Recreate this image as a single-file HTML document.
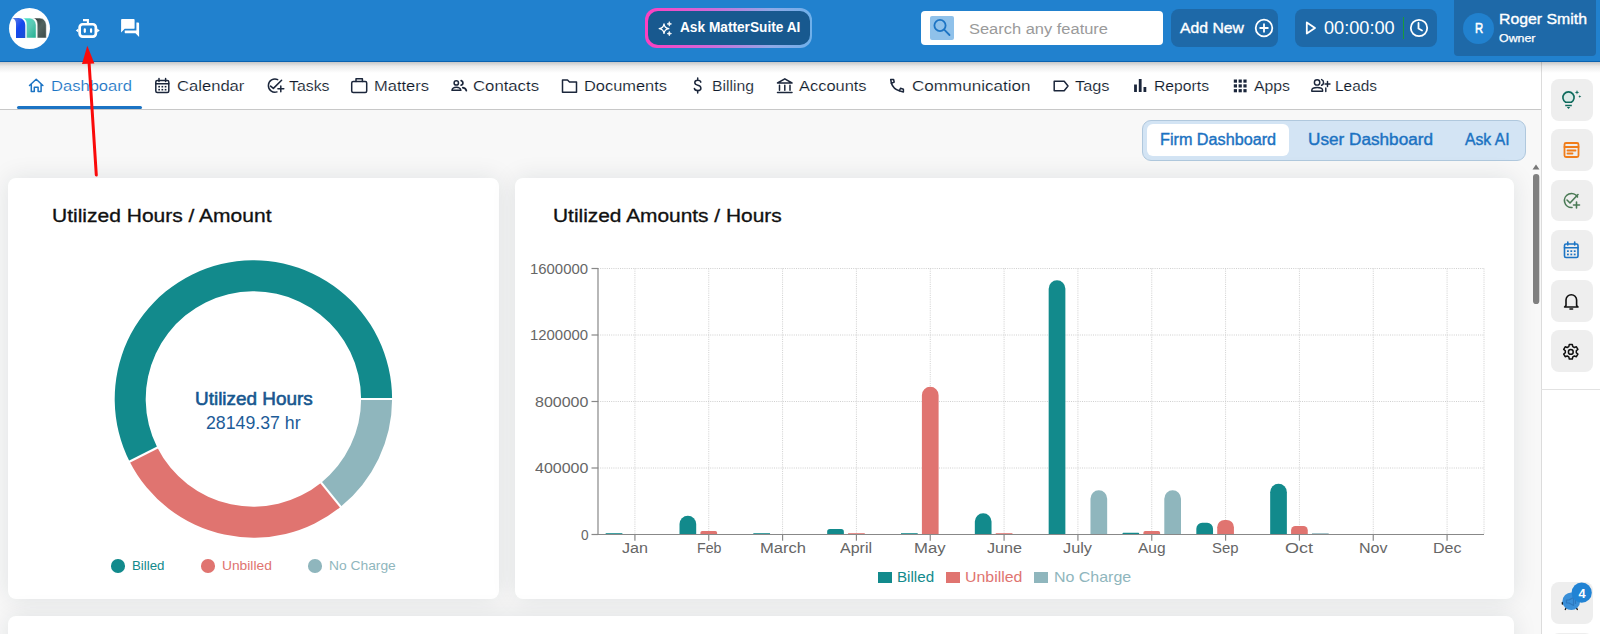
<!DOCTYPE html>
<html><head><meta charset="utf-8">
<style>
*{margin:0;padding:0;box-sizing:border-box}
html,body{width:1600px;height:634px;overflow:hidden;background:#f8f8f8;font-family:"Liberation Sans",sans-serif}
.a{position:absolute}
.tx{position:absolute;white-space:nowrap;line-height:1;transform-origin:0 0}
#hdr{left:0;top:0;width:1600px;height:61.5px;background:#2181ce}
#nav{left:0;top:61.5px;width:1541px;height:48px;background:#fff;border-bottom:1px solid #c8c8c8}
#navsh{left:0;top:61.5px;width:1600px;height:11px;background:linear-gradient(rgba(0,0,0,.22),rgba(0,0,0,.08) 40%,rgba(0,0,0,0))}
#hdrline{left:0;top:60.5px;width:1600px;height:1px;background:#0a62b0}
#side{left:1541px;top:61.5px;width:59px;height:573px;background:#fff;border-left:1px solid #dcdcdc}
.card{background:#fff;border-radius:8px;box-shadow:0 0 24px rgba(20,35,50,.10)}
.sbtn{left:1551px;width:41.5px;height:41.5px;border-radius:8px;background:#eeeeee}
</style></head><body>
<div class="a" id="hdr"></div>
<div class="a" id="hdrline"></div>

<!-- logo -->
<div class="a" style="left:8.8px;top:7.5px;width:41px;height:41px;border-radius:50%;background:#fff"></div>
<svg class="a" style="left:0;top:0" width="60" height="60" viewBox="0 0 60 60">
  <defs>
    <linearGradient id="lg1" x1="0" y1="0" x2="1" y2="1"><stop offset="0" stop-color="#6a86e0"/><stop offset="0.5" stop-color="#1448f0"/><stop offset="1" stop-color="#1c50d0"/></linearGradient>
    <linearGradient id="lg2" x1="0" y1="0" x2="1" y2="1"><stop offset="0" stop-color="#3ee6cc"/><stop offset="0.5" stop-color="#5cc8b4"/><stop offset="1" stop-color="#22b090"/></linearGradient>
    <linearGradient id="lg3" x1="0" y1="0" x2="1" y2="1"><stop offset="0" stop-color="#2a3634"/><stop offset="0.5" stop-color="#526460"/><stop offset="1" stop-color="#3c4a48"/></linearGradient>
  </defs>
  <path d="M12 18.1 H18.6 C22.6 18.1 25.3 21.3 25.3 25.6 V38 H16 V23.8 C16 20.8 14.6 18.7 12 18.1 Z" fill="url(#lg1)"/>
  <path d="M22.4 18.1 H29.4 C33.3 18.1 36.1 21.3 36.1 25.6 V38 H26.4 V23.8 C26.4 20.8 25 18.7 22.4 18.1 Z" fill="url(#lg2)" stroke="#fff" stroke-width="0.5"/>
  <path d="M33 18.1 H39.6 C43.5 18.1 46.3 21.3 46.3 25.6 V38 H37.2 V23.8 C37.2 20.8 35.7 18.7 33 18.1 Z" fill="url(#lg3)" stroke="#fff" stroke-width="0.5"/>
</svg>
<!-- robot icon -->
<svg class="a" style="left:70px;top:12px" width="80" height="30" viewBox="70 12 80 30">
  <g fill="none" stroke="#fff" stroke-width="2.7">
    <rect x="79.65" y="24.25" width="16.2" height="12.3" rx="3"/>
  </g>
  <path d="M83 20.15 H87.9 V24" fill="none" stroke="#fff" stroke-width="2.1"/>
  <path d="M78.4 28.5 L75.8 30.5 L78.4 32.5 Z M97.1 28.5 L99.7 30.5 L97.1 32.5 Z" fill="#fff"/>
  <path d="M84.8 29.3 V31.8 M91.05 29.3 V31.8" stroke="#fff" stroke-width="2.2" stroke-linecap="round"/>
  <!-- chat -->
  <g transform="translate(119.3 17.1) scale(0.9)" fill="#fff">
    <path d="M21 6h-2v9H6v2c0 .55.45 1 1 1h11l4 4V7c0-.55-.45-1-1-1zm-4 6V3c0-.55-.45-1-1-1H3c-.55 0-1 .45-1 1v14l4-4h10c.55 0 1-.45 1-1z"/>
  </g>
</svg>

<!-- Ask MatterSuite AI -->
<div class="a" style="left:645px;top:8px;width:167px;height:39.5px;border-radius:12px;background:linear-gradient(90deg,#ff3ec0 0%,#d06ad8 40%,#8fa9e6 75%,#6fb0ea 100%)"></div>
<div class="a" style="left:647.5px;top:10.5px;width:162px;height:34.5px;border-radius:10px;background:#18598f"></div>
<svg class="a" style="left:655px;top:19px" width="20" height="20" viewBox="655 19 20 20" fill="none" stroke="#fff" stroke-width="1.3" stroke-linejoin="round">
  <path d="M664 23.8 Q664.6 28 668.8 28.6 Q664.6 29.2 664 33.4 Q663.4 29.2 659.2 28.6 Q663.4 28 664 23.8Z"/>
  <path d="M669.3 21.6 L669.9 23.3 L671.6 23.9 L669.9 24.5 L669.3 26.2 L668.7 24.5 L667 23.9 L668.7 23.3Z M669.3 31.3 L669.9 33 L671.6 33.6 L669.9 34.2 L669.3 35.9 L668.7 34.2 L667 33.6 L668.7 33Z" fill="#fff" stroke-width="0.6"/>
</svg>

<!-- search -->
<div class="a" style="left:921.4px;top:11.2px;width:241.4px;height:33.6px;border-radius:4px;background:#fff"></div>
<div class="a" style="left:930.3px;top:16px;width:24px;height:23.6px;border-radius:2px;background:#8fc1ea"></div>
<svg class="a" style="left:930px;top:16px" width="24" height="24" viewBox="0 0 24 24" fill="none" stroke="#1c74c4" stroke-width="1.8" stroke-linecap="round">
  <circle cx="10" cy="9.5" r="5.6"/><path d="M14.2 13.7 L19.5 19"/>
</svg>

<!-- add new -->
<div class="a" style="left:1171.2px;top:9.4px;width:106.6px;height:37.2px;border-radius:8px;background:#1e69a8"></div>
<svg class="a" style="left:1253.5px;top:18px" width="20" height="20" viewBox="0 0 20 20" fill="none" stroke="#fff" stroke-width="1.8">
  <circle cx="10" cy="10" r="8.3"/><path d="M10 5.5 V14.5 M5.5 10 H14.5"/>
</svg>

<!-- timer -->
<div class="a" style="left:1295px;top:9px;width:142.3px;height:37.8px;border-radius:8px;background:#1e69a8"></div>
<svg class="a" style="left:1304px;top:20px" width="14" height="16" viewBox="0 0 14 16" fill="none" stroke="#fff" stroke-width="1.8" stroke-linejoin="round">
  <path d="M2.8 2.5 L11 8 L2.8 13.5 Z"/>
</svg>
<div class="a" style="left:1403px;top:17.2px;width:1.2px;height:21.8px;background:#1a9a3a"></div>
<svg class="a" style="left:1408.5px;top:18.3px" width="20" height="20" viewBox="0 0 20 20" fill="none" stroke="#fff" stroke-width="1.8" stroke-linecap="round">
  <circle cx="10" cy="10" r="8.2"/><path d="M9.5 5 V10.5 L13 12.5"/>
</svg>

<!-- user -->
<div class="a" style="left:1454px;top:0;width:142px;height:55.5px;border-radius:0 0 4px 4px;background:#1e69a8"></div>
<div class="a" style="left:1462.5px;top:12.6px;width:31.5px;height:31.5px;border-radius:50%;background:#2181ce"></div>

<!-- NAV -->
<div class="a" id="nav"></div>
<div class="a" style="left:16.7px;top:106.3px;width:125.3px;height:2.6px;border-radius:2px;background:#1c74c4"></div>

<!-- nav icons -->
<svg class="a" style="left:0;top:70px" width="1400" height="30" viewBox="0 70 1400 30" fill="none" stroke="#1b263b" stroke-width="1.45" stroke-linejoin="round" stroke-linecap="round">
  <!-- house -->
  <path d="M29.5 85.5 L36.2 79.2 L42.9 85.5 M31.3 84 V91.5 H34.3 V87.2 H38.1 V91.5 H41.1 V84" stroke="#1c74c4" stroke-width="1.5"/>
  <!-- calendar -->
  <rect x="155.8" y="80.5" width="13" height="12" rx="1.5" stroke-width="1.5"/>
  <path d="M155.8 83.8 H168.8 M159 78.5 V81.5 M165.6 78.5 V81.5" stroke-width="1.5"/>
  <g fill="#1b263b" stroke="none"><rect x="158.3" y="85.9" width="1.7" height="1.6"/><rect x="161.5" y="85.9" width="1.7" height="1.6"/><rect x="164.7" y="85.9" width="1.7" height="1.6"/><rect x="158.3" y="88.9" width="1.7" height="1.6"/><rect x="161.5" y="88.9" width="1.7" height="1.6"/><rect x="164.7" y="88.9" width="1.7" height="1.6"/></g>
  <!-- tasks -->
  <path d="M277.7 79.6 A6.6 6.6 0 1 0 277 91.9" stroke-width="1.5"/>
  <path d="M270.6 86.1 L273.4 88.4 L281.6 80.3" stroke-width="1.5"/>
  <path d="M280.8 86 V91.7 M277.9 88.8 H283.8" stroke-width="1.5"/>
  <!-- matters briefcase -->
  <rect x="351.7" y="81.5" width="15" height="11" rx="1.5" stroke-width="1.5"/>
  <path d="M356 81.5 V78.7 H362.4 V81.5" stroke-width="1.5"/>
  <!-- contacts -->
  <circle cx="456.3" cy="82.9" r="2.2" stroke-width="1.5"/>
  <path d="M461.2 80.6 A2.4 2.4 0 0 1 461.2 85.2" stroke-width="1.8"/>
  <path d="M451.9 90.3 Q452.6 87.3 456.4 87.3 Q460.2 87.3 460.9 90.3 Z" stroke-width="1.5"/>
  <path d="M462.8 87.6 Q465.9 88.3 466.3 90.6" stroke-width="1.8"/>
  <!-- documents folder -->
  <path d="M562.5 80 H567.5 L569.5 82 H576.5 V92.3 H562.5 Z" stroke-width="1.5"/>
  <!-- billing $ -->
  <path d="M700.8 82.2 Q700.5 80.2 697.7 80.2 Q694.8 80.2 694.8 82.6 Q694.8 84.6 697.8 85.2 Q700.9 85.9 700.9 88.2 Q700.9 90.6 697.8 90.6 Q694.8 90.6 694.4 88.5 M697.7 78 V80.2 M697.7 90.6 V93" stroke-width="1.5"/>
  <!-- accounts bank -->
  <path d="M777.5 83 L784.8 78.8 L792 83 Z M779.5 85.3 V90.3 M784.8 85.3 V90.3 M790 85.3 V90.3 M777.5 92.5 H792" stroke-width="1.5"/>
  <!-- phone -->
  <path d="M890.7 79.5 H893.6 L894.2 82.1 L891.4 83.2 Z" stroke-width="1.5"/>
  <path d="M891.4 83.2 Q893.2 88.8 899.4 90.8" stroke-width="1.6"/>
  <path d="M899.4 90.8 L900.5 88.3 L903.4 89.2 V92.1 Z" stroke-width="1.5"/>
  <!-- tags -->
  <path d="M1054.2 81.3 H1064.2 L1068 86 L1064.2 90.7 H1054.2 Z" stroke-width="1.5"/>
  <!-- reports -->
  <path d="M1135.5 84.5 V92 M1140.2 79 V92 M1144.9 87 V92" stroke-width="2.8" stroke-linecap="butt"/>
  <!-- apps -->
  <g fill="#1b263b" stroke="none">
    <rect x="1233.8" y="79.5" width="3.2" height="3.2"/><rect x="1238.6" y="79.5" width="3.2" height="3.2"/><rect x="1243.4" y="79.5" width="3.2" height="3.2"/>
    <rect x="1233.8" y="84.3" width="3.2" height="3.2"/><rect x="1238.6" y="84.3" width="3.2" height="3.2"/><rect x="1243.4" y="84.3" width="3.2" height="3.2"/>
    <rect x="1233.8" y="89.1" width="3.2" height="3.2"/><rect x="1238.6" y="89.1" width="3.2" height="3.2"/><rect x="1243.4" y="89.1" width="3.2" height="3.2"/>
  </g>
  <!-- leads -->
  <circle cx="1317.1" cy="82.4" r="2.7" stroke-width="1.45"/>
  <path d="M1321.6 79.6 A3 3 0 0 1 1321.6 85.2" stroke-width="1.5"/>
  <path d="M1311.8 91.3 V90 Q1312.2 87.4 1317.2 87.4 Q1322.2 87.4 1322.6 90 V91.3 Z" stroke-width="1.45"/>
  <path d="M1325.8 88 V91.5" stroke-width="1.45"/>
  <path d="M1327.5 81.4 V86.4 M1325 83.9 H1330" stroke-width="1.45"/>
</svg>

<!-- sidebar -->
<div class="a" id="side"></div>
<div class="a" style="left:1541px;top:389px;width:59px;height:1px;background:#e2e2e2"></div>
<div class="a sbtn" style="top:79px"></div>
<div class="a sbtn" style="top:129px"></div>
<div class="a sbtn" style="top:179.5px"></div>
<div class="a sbtn" style="top:229.5px"></div>
<div class="a sbtn" style="top:280px"></div>
<div class="a sbtn" style="top:330px"></div>
<div class="a sbtn" style="top:582px"></div>
<div class="a sbtn" style="top:632.5px"></div>
<svg class="a" style="left:1541px;top:62px" width="59" height="572" viewBox="1541 62 59 572" fill="none" stroke-linecap="round" stroke-linejoin="round">
  <!-- bulb -->
  <circle cx="1568.5" cy="97" r="6.5" fill="#dcebe8" stroke="none"/>
  <path d="M1565.6 102.3 A5.6 5.6 0 1 1 1571.4 102.3 Z" stroke="#0e6a5c" stroke-width="1.6"/>
  <path d="M1565.2 105.5 H1571.8" stroke="#0e6a5c" stroke-width="1.5" stroke-linecap="butt"/>
  <path d="M1566.8 107.1 H1570.2 L1568.5 109 Z" fill="#0e6a5c" stroke="none"/>
  <path d="M1577 90 L1577.6 91.7 L1579.3 92.3 L1577.6 92.9 L1577 94.6 L1576.4 92.9 L1574.7 92.3 L1576.4 91.7Z M1579.8 95 L1580.2 96.1 L1581.3 96.5 L1580.2 96.9 L1579.8 98 L1579.4 96.9 L1578.3 96.5 L1579.4 96.1Z" fill="#0e6a5c" stroke="none"/>
  <!-- note -->
  <g stroke="#f07d1a" stroke-width="1.8">
    <rect x="1564.5" y="143" width="14" height="14" rx="1.5"/>
    <path d="M1564.5 147 H1578.5 M1567.5 150.5 H1575.5 M1567.5 153.5 H1572.5"/>
  </g>
  <!-- check plus -->
  <g stroke="#4a7a55" stroke-width="1.6">
    <path d="M1577.5 197 A7 7 0 1 0 1572 207.5"/>
    <path d="M1567 200 L1570 203 L1578 194.5"/>
    <path d="M1576.5 202 V208 M1573.5 205 H1579.5"/>
  </g>
  <!-- calendar -->
  <g stroke="#1c74c4" stroke-width="1.6">
    <rect x="1564.5" y="244" width="13.5" height="13.5" rx="1.5"/>
    <path d="M1564.5 247.8 H1578 M1567.8 242 V245 M1574.7 242 V245"/>
    <g fill="#1c74c4" stroke="none"><rect x="1567" y="250.3" width="1.8" height="1.7"/><rect x="1570.4" y="250.3" width="1.8" height="1.7"/><rect x="1573.8" y="250.3" width="1.8" height="1.7"/><rect x="1567" y="253.6" width="1.8" height="1.7"/><rect x="1570.4" y="253.6" width="1.8" height="1.7"/><rect x="1573.8" y="253.6" width="1.8" height="1.7"/></g>
  </g>
  <!-- bell -->
  <g stroke="#111" stroke-width="1.6">
    <path d="M1566 305.5 V300 A5.3 5.3 0 0 1 1576.6 300 V305.5 L1578 307 H1564.6 Z"/>
    <path d="M1570 309 H1572.6"/>
  </g>
  <!-- gear -->
  <g stroke="#111" stroke-width="1.5">
    <path d="M1569.3 344.5 h3 l0.5 2.1 1.6 0.9 2 -0.7 1.5 2.6 -1.6 1.4 v1.9 l1.6 1.4 -1.5 2.6 -2 -0.7 -1.6 0.9 -0.5 2.1 h-3 l-0.5 -2.1 -1.6 -0.9 -2 0.7 -1.5 -2.6 1.6 -1.4 v-1.9 l-1.6 -1.4 1.5 -2.6 2 0.7 1.6 -0.9 Z"/>
    <circle cx="1570.8" cy="351.9" r="2.4"/>
  </g>
  <!-- chat badge -->
  <path d="M1565.3 609.5 l0.8 -1.5 M1577.3 609.5 l-0.8 -1.5 M1562.4 604 v-1.5" stroke="#111" stroke-width="1.4"/>
  <circle cx="1571.3" cy="601.2" r="8.8" fill="#3a8fd8"/>
  <path d="M1566.5 600 h2.5 l4.5 -2.5 v8 l-4.5 -2.5 h-2.5z M1575.5 599.5 v4" stroke="#2d78bf" stroke-width="1.2"/>
  <circle cx="1581.7" cy="592.7" r="10.1" fill="#2183d4"/>
  <text x="1582" y="597.6" font-family="Liberation Sans" font-weight="bold" font-size="12.8" fill="#fff" text-anchor="middle">4</text>
</svg>

<div class="a" id="navsh"></div>
<!-- scrollbar -->
<svg class="a" style="left:1530px;top:160px" width="12" height="150" viewBox="0 0 12 150">
  <path d="M2.5 9.6 L6 4.5 L9.5 9.6 Z" fill="#777"/>
  <rect x="3" y="14" width="6.3" height="130" rx="3.1" fill="#808080"/>
</svg>

<!-- TABS -->
<div class="a" style="left:1142.3px;top:120.3px;width:383.7px;height:41px;border-radius:9px;background:#d3e4f4;border:1px solid #b0c8dd"></div>
<div class="a" style="left:1146.7px;top:124.1px;width:142.3px;height:31.5px;border-radius:6px;background:#fff"></div>

<!-- CARDS -->
<div class="a card" style="left:8.2px;top:177.7px;width:490.4px;height:421.3px"></div>
<div class="a card" style="left:515.3px;top:177.7px;width:998.3px;height:421.3px"></div>
<div class="a card" style="left:8.2px;top:615.6px;width:1505.4px;height:40px"></div>

<!-- DONUT -->
<svg class="a" style="left:100px;top:245px" width="310" height="310" viewBox="100 245 310 310">
  <g id="donut"></g>
  <path d="M392.10 399.00 A138.7 138.7 0 0 1 340.69 506.79 L321.18 482.70 A107.7 107.7 0 0 0 361.10 399.00 Z" fill="#8fb6bd"/>
<path d="M340.69 506.79 A138.7 138.7 0 0 1 129.60 461.54 L157.27 447.56 A107.7 107.7 0 0 0 321.18 482.70 Z" fill="#e07470"/>
<path d="M129.60 461.54 A138.7 138.7 0 1 1 392.10 399.00 L361.10 399.00 A107.7 107.7 0 1 0 157.27 447.56 Z" fill="#128a8c"/>
<line x1="359.10" y1="399.00" x2="394.10" y2="399.00" stroke="#fff" stroke-width="2.2"/>
<line x1="319.92" y1="481.14" x2="341.95" y2="508.34" stroke="#fff" stroke-width="2.2"/>
<line x1="159.05" y1="446.66" x2="127.81" y2="462.44" stroke="#fff" stroke-width="2.2"/>
</svg>
<!-- donut legend dots -->
<div class="a" style="left:111.2px;top:559.3px;width:13.6px;height:13.6px;border-radius:50%;background:#128a8c"></div>
<div class="a" style="left:201px;top:559.3px;width:13.6px;height:13.6px;border-radius:50%;background:#e07470"></div>
<div class="a" style="left:308.3px;top:559.3px;width:13.6px;height:13.6px;border-radius:50%;background:#8fb6bd"></div>

<!-- BAR CHART -->
<svg class="a" style="left:520px;top:250px" width="980" height="300" viewBox="520 250 980 300">
  <line x1="598.0" y1="468.00" x2="1484.0" y2="468.00" stroke="#cfcfcf" stroke-width="1" stroke-dasharray="1 1.2"/>
<line x1="591.5" y1="468.00" x2="598.0" y2="468.00" stroke="#888" stroke-width="1.2"/>
<line x1="598.0" y1="401.50" x2="1484.0" y2="401.50" stroke="#cfcfcf" stroke-width="1" stroke-dasharray="1 1.2"/>
<line x1="591.5" y1="401.50" x2="598.0" y2="401.50" stroke="#888" stroke-width="1.2"/>
<line x1="598.0" y1="335.00" x2="1484.0" y2="335.00" stroke="#cfcfcf" stroke-width="1" stroke-dasharray="1 1.2"/>
<line x1="591.5" y1="335.00" x2="598.0" y2="335.00" stroke="#888" stroke-width="1.2"/>
<line x1="598.0" y1="268.50" x2="1484.0" y2="268.50" stroke="#cfcfcf" stroke-width="1" stroke-dasharray="1 1.2"/>
<line x1="591.5" y1="268.50" x2="598.0" y2="268.50" stroke="#888" stroke-width="1.2"/>
<line x1="591.5" y1="534.5" x2="598.0" y2="534.5" stroke="#888" stroke-width="1.2"/>
<line x1="634.92" y1="268.5" x2="634.92" y2="534.5" stroke="#cfcfcf" stroke-width="1" stroke-dasharray="1 1.2"/>
<line x1="634.92" y1="534.5" x2="634.92" y2="540.7" stroke="#888" stroke-width="1.2"/>
<line x1="708.75" y1="268.5" x2="708.75" y2="534.5" stroke="#cfcfcf" stroke-width="1" stroke-dasharray="1 1.2"/>
<line x1="708.75" y1="534.5" x2="708.75" y2="540.7" stroke="#888" stroke-width="1.2"/>
<line x1="782.58" y1="268.5" x2="782.58" y2="534.5" stroke="#cfcfcf" stroke-width="1" stroke-dasharray="1 1.2"/>
<line x1="782.58" y1="534.5" x2="782.58" y2="540.7" stroke="#888" stroke-width="1.2"/>
<line x1="856.42" y1="268.5" x2="856.42" y2="534.5" stroke="#cfcfcf" stroke-width="1" stroke-dasharray="1 1.2"/>
<line x1="856.42" y1="534.5" x2="856.42" y2="540.7" stroke="#888" stroke-width="1.2"/>
<line x1="930.25" y1="268.5" x2="930.25" y2="534.5" stroke="#cfcfcf" stroke-width="1" stroke-dasharray="1 1.2"/>
<line x1="930.25" y1="534.5" x2="930.25" y2="540.7" stroke="#888" stroke-width="1.2"/>
<line x1="1004.08" y1="268.5" x2="1004.08" y2="534.5" stroke="#cfcfcf" stroke-width="1" stroke-dasharray="1 1.2"/>
<line x1="1004.08" y1="534.5" x2="1004.08" y2="540.7" stroke="#888" stroke-width="1.2"/>
<line x1="1077.92" y1="268.5" x2="1077.92" y2="534.5" stroke="#cfcfcf" stroke-width="1" stroke-dasharray="1 1.2"/>
<line x1="1077.92" y1="534.5" x2="1077.92" y2="540.7" stroke="#888" stroke-width="1.2"/>
<line x1="1151.75" y1="268.5" x2="1151.75" y2="534.5" stroke="#cfcfcf" stroke-width="1" stroke-dasharray="1 1.2"/>
<line x1="1151.75" y1="534.5" x2="1151.75" y2="540.7" stroke="#888" stroke-width="1.2"/>
<line x1="1225.58" y1="268.5" x2="1225.58" y2="534.5" stroke="#cfcfcf" stroke-width="1" stroke-dasharray="1 1.2"/>
<line x1="1225.58" y1="534.5" x2="1225.58" y2="540.7" stroke="#888" stroke-width="1.2"/>
<line x1="1299.42" y1="268.5" x2="1299.42" y2="534.5" stroke="#cfcfcf" stroke-width="1" stroke-dasharray="1 1.2"/>
<line x1="1299.42" y1="534.5" x2="1299.42" y2="540.7" stroke="#888" stroke-width="1.2"/>
<line x1="1373.25" y1="268.5" x2="1373.25" y2="534.5" stroke="#cfcfcf" stroke-width="1" stroke-dasharray="1 1.2"/>
<line x1="1373.25" y1="534.5" x2="1373.25" y2="540.7" stroke="#888" stroke-width="1.2"/>
<line x1="1447.08" y1="268.5" x2="1447.08" y2="534.5" stroke="#cfcfcf" stroke-width="1" stroke-dasharray="1 1.2"/>
<line x1="1447.08" y1="534.5" x2="1447.08" y2="540.7" stroke="#888" stroke-width="1.2"/>
<line x1="1484.0" y1="268.5" x2="1484.0" y2="534.5" stroke="#cfcfcf" stroke-width="1" stroke-dasharray="1 1.2"/>
<rect x="605.67" y="533.20" width="16.7" height="1.3" fill="#128a8c"/>
<path d="M679.50 534.5 V524.05 A8.35 8.35 0 0 1 687.85 515.70 H687.85 A8.35 8.35 0 0 1 696.20 524.05 V534.5 Z" fill="#128a8c"/>
<path d="M700.40 534.5 V532.75 A1.75 1.75 0 0 1 702.15 531.00 H715.35 A1.75 1.75 0 0 1 717.10 532.75 V534.5 Z" fill="#e07470"/>
<rect x="753.33" y="533.20" width="16.7" height="1.3" fill="#128a8c"/>
<path d="M827.17 534.5 V531.75 A2.75 2.75 0 0 1 829.92 529.00 H841.12 A2.75 2.75 0 0 1 843.87 531.75 V534.5 Z" fill="#128a8c"/>
<rect x="848.07" y="533.20" width="16.7" height="1.3" fill="#e07470"/>
<rect x="901.00" y="533.20" width="16.7" height="1.3" fill="#128a8c"/>
<path d="M921.90 534.5 V395.15 A8.35 8.35 0 0 1 930.25 386.80 H930.25 A8.35 8.35 0 0 1 938.60 395.15 V534.5 Z" fill="#e07470"/>
<path d="M974.83 534.5 V521.55 A8.35 8.35 0 0 1 983.18 513.20 H983.18 A8.35 8.35 0 0 1 991.53 521.55 V534.5 Z" fill="#128a8c"/>
<rect x="995.73" y="533.20" width="16.7" height="1.3" fill="#e07470"/>
<path d="M1048.67 534.5 V288.65 A8.35 8.35 0 0 1 1057.02 280.30 H1057.02 A8.35 8.35 0 0 1 1065.37 288.65 V534.5 Z" fill="#128a8c"/>
<path d="M1090.47 534.5 V498.65 A8.35 8.35 0 0 1 1098.82 490.30 H1098.82 A8.35 8.35 0 0 1 1107.17 498.65 V534.5 Z" fill="#8fb6bd"/>
<path d="M1122.50 534.5 V533.65 A0.85 0.85 0 0 1 1123.35 532.80 H1138.35 A0.85 0.85 0 0 1 1139.20 533.65 V534.5 Z" fill="#128a8c"/>
<path d="M1143.40 534.5 V532.75 A1.75 1.75 0 0 1 1145.15 531.00 H1158.35 A1.75 1.75 0 0 1 1160.10 532.75 V534.5 Z" fill="#e07470"/>
<path d="M1164.30 534.5 V498.65 A8.35 8.35 0 0 1 1172.65 490.30 H1172.65 A8.35 8.35 0 0 1 1181.00 498.65 V534.5 Z" fill="#8fb6bd"/>
<path d="M1196.33 534.5 V528.65 A5.85 5.85 0 0 1 1202.18 522.80 H1207.18 A5.85 5.85 0 0 1 1213.03 528.65 V534.5 Z" fill="#128a8c"/>
<path d="M1217.23 534.5 V527.25 A7.25 7.25 0 0 1 1224.48 520.00 H1226.68 A7.25 7.25 0 0 1 1233.93 527.25 V534.5 Z" fill="#e07470"/>
<path d="M1270.17 534.5 V492.15 A8.35 8.35 0 0 1 1278.52 483.80 H1278.52 A8.35 8.35 0 0 1 1286.87 492.15 V534.5 Z" fill="#128a8c"/>
<path d="M1291.07 534.5 V530.25 A4.25 4.25 0 0 1 1295.32 526.00 H1303.52 A4.25 4.25 0 0 1 1307.77 530.25 V534.5 Z" fill="#e07470"/>
<rect x="1311.97" y="533.20" width="16.7" height="1.3" fill="#8fb6bd"/>
<line x1="598.0" y1="268.0" x2="598.0" y2="535.0" stroke="#888" stroke-width="1.2"/>
<line x1="598.0" y1="534.5" x2="1484.0" y2="534.5" stroke="#888" stroke-width="1.2"/>
</svg>
<div class="a" style="left:877.6px;top:572.1px;width:14px;height:10.7px;background:#128a8c"></div>
<div class="a" style="left:945.6px;top:572.1px;width:14.4px;height:10.7px;background:#e07470"></div>
<div class="a" style="left:1034.2px;top:572.1px;width:13.8px;height:10.7px;background:#8fb6bd"></div>

<div class="tx" id="t0" style="left:680.00px;top:20.02px;font-size:14.5px;color:#fff;font-weight:bold;transform:scaleX(0.9430);">Ask MatterSuite AI</div>
<div class="tx" id="t1" style="left:969.00px;top:20.88px;font-size:15.5px;color:#9a9a9a;font-weight:normal;transform:scaleX(1.0612);">Search any feature</div>
<div class="tx" id="t2" style="left:1180.30px;top:20.33px;font-size:15.2px;color:#fff;font-weight:normal;transform:scaleX(1.0383);-webkit-text-stroke:0.35px #fff;">Add New</div>
<div class="tx" id="t3" style="left:1324.00px;top:18.74px;font-size:18.5px;color:#fff;font-weight:normal;transform:scaleX(0.9817);">00:00:00</div>
<div class="tx" id="t4" style="left:1474.80px;top:20.52px;font-size:14.5px;color:#fff;font-weight:normal;transform:scaleX(0.7821);-webkit-text-stroke:0.55px #fff;">R</div>
<div class="tx" id="t5" style="left:1499.00px;top:11.84px;font-size:14.6px;color:#fff;font-weight:normal;transform:scaleX(1.0850);-webkit-text-stroke:0.35px #fff;">Roger Smith</div>
<div class="tx" id="t6" style="left:1499.00px;top:33.16px;font-size:11.5px;color:#fff;font-weight:normal;transform:scaleX(1.0775);-webkit-text-stroke:0.25px #fff;">Owner</div>
<div class="tx" id="t7" style="left:50.80px;top:77.63px;font-size:15.2px;color:#1c74c4;font-weight:normal;transform:scaleX(1.0900);-webkit-text-stroke:0.15px #fff;">Dashboard</div>
<div class="tx" id="t8" style="left:176.60px;top:77.63px;font-size:15.2px;color:#101a2c;font-weight:normal;transform:scaleX(1.0934);-webkit-text-stroke:0.15px #fff;">Calendar</div>
<div class="tx" id="t9" style="left:289.00px;top:77.63px;font-size:15.2px;color:#101a2c;font-weight:normal;transform:scaleX(1.0431);-webkit-text-stroke:0.15px #fff;">Tasks</div>
<div class="tx" id="t10" style="left:373.50px;top:77.63px;font-size:15.2px;color:#101a2c;font-weight:normal;transform:scaleX(1.0861);-webkit-text-stroke:0.15px #fff;">Matters</div>
<div class="tx" id="t11" style="left:473.00px;top:77.63px;font-size:15.2px;color:#101a2c;font-weight:normal;transform:scaleX(1.1011);-webkit-text-stroke:0.15px #fff;">Contacts</div>
<div class="tx" id="t12" style="left:584.00px;top:77.63px;font-size:15.2px;color:#101a2c;font-weight:normal;transform:scaleX(1.0803);-webkit-text-stroke:0.15px #fff;">Documents</div>
<div class="tx" id="t13" style="left:712.00px;top:77.63px;font-size:15.2px;color:#101a2c;font-weight:normal;transform:scaleX(1.0362);-webkit-text-stroke:0.15px #fff;">Billing</div>
<div class="tx" id="t14" style="left:799.00px;top:77.63px;font-size:15.2px;color:#101a2c;font-weight:normal;transform:scaleX(1.0819);-webkit-text-stroke:0.15px #fff;">Accounts</div>
<div class="tx" id="t15" style="left:911.60px;top:77.63px;font-size:15.2px;color:#101a2c;font-weight:normal;transform:scaleX(1.1221);-webkit-text-stroke:0.15px #fff;">Communication</div>
<div class="tx" id="t16" style="left:1075.00px;top:77.63px;font-size:15.2px;color:#101a2c;font-weight:normal;transform:scaleX(1.0750);-webkit-text-stroke:0.15px #fff;">Tags</div>
<div class="tx" id="t17" style="left:1154.00px;top:77.63px;font-size:15.2px;color:#101a2c;font-weight:normal;transform:scaleX(1.0341);-webkit-text-stroke:0.15px #fff;">Reports</div>
<div class="tx" id="t18" style="left:1254.00px;top:77.63px;font-size:15.2px;color:#101a2c;font-weight:normal;transform:scaleX(1.0397);-webkit-text-stroke:0.15px #fff;">Apps</div>
<div class="tx" id="t19" style="left:1335.00px;top:77.63px;font-size:15.2px;color:#101a2c;font-weight:normal;transform:scaleX(1.0147);-webkit-text-stroke:0.15px #fff;">Leads</div>
<div class="tx" id="t20" style="left:1159.50px;top:132.02px;font-size:15.8px;color:#1b72c2;font-weight:normal;transform:scaleX(1.0252);-webkit-text-stroke:0.4px #1b72c2;">Firm Dashboard</div>
<div class="tx" id="t21" style="left:1308.00px;top:132.02px;font-size:15.8px;color:#1b72c2;font-weight:normal;transform:scaleX(1.0867);-webkit-text-stroke:0.4px #1b72c2;">User Dashboard</div>
<div class="tx" id="t22" style="left:1465.00px;top:132.02px;font-size:15.8px;color:#1b72c2;font-weight:normal;transform:scaleX(0.9937);-webkit-text-stroke:0.4px #1b72c2;">Ask AI</div>
<div class="tx" id="t23" style="left:52.40px;top:207.17px;font-size:18.7px;color:#111;font-weight:normal;transform:scaleX(1.1241);-webkit-text-stroke:0.32px #111;">Utilized Hours / Amount</div>
<div class="tx" id="t24" style="left:552.90px;top:207.17px;font-size:18.7px;color:#111;font-weight:normal;transform:scaleX(1.1177);-webkit-text-stroke:0.32px #111;">Utilized Amounts / Hours</div>
<div class="tx" id="t25" style="left:194.70px;top:389.41px;font-size:19.0px;color:#17578f;font-weight:normal;transform:scaleX(0.9961);-webkit-text-stroke:0.6px #17578f;">Utilized Hours</div>
<div class="tx" id="t26" style="left:206.00px;top:412.91px;font-size:19.0px;color:#1d5c98;font-weight:normal;transform:scaleX(0.9327);">28149.37 hr</div>
<div class="tx" id="t27" style="left:132.00px;top:559.12px;font-size:13.2px;color:#128a8c;font-weight:normal;transform:scaleX(1.0073);">Billed</div>
<div class="tx" id="t28" style="left:221.70px;top:559.12px;font-size:13.2px;color:#e07470;font-weight:normal;transform:scaleX(1.0450);">Unbilled</div>
<div class="tx" id="t29" style="left:328.70px;top:559.12px;font-size:13.2px;color:#8fb6bd;font-weight:normal;transform:scaleX(1.0473);">No Charge</div>
<div class="tx" id="t30" style="left:580.70px;top:527.00px;font-size:15.0px;color:#666;font-weight:normal;transform:scaleX(0.9109);">0</div>
<div class="tx" id="t31" style="left:534.90px;top:460.40px;font-size:15.0px;color:#666;font-weight:normal;transform:scaleX(1.0667);">400000</div>
<div class="tx" id="t32" style="left:534.90px;top:393.80px;font-size:15.0px;color:#666;font-weight:normal;transform:scaleX(1.0667);">800000</div>
<div class="tx" id="t33" style="left:530.30px;top:327.20px;font-size:15.0px;color:#666;font-weight:normal;transform:scaleX(0.9930);">1200000</div>
<div class="tx" id="t34" style="left:530.30px;top:260.60px;font-size:15.0px;color:#666;font-weight:normal;transform:scaleX(0.9930);">1600000</div>
<div class="tx" id="t35" style="left:621.91px;top:541.35px;font-size:14.0px;color:#666;font-weight:normal;transform:scaleX(1.1516);">Jan</div>
<div class="tx" id="t36" style="left:696.50px;top:541.35px;font-size:14.0px;color:#666;font-weight:normal;transform:scaleX(1.0155);">Feb</div>
<div class="tx" id="t37" style="left:759.58px;top:541.35px;font-size:14.0px;color:#666;font-weight:normal;transform:scaleX(1.1823);">March</div>
<div class="tx" id="t38" style="left:840.40px;top:541.35px;font-size:14.0px;color:#666;font-weight:normal;transform:scaleX(1.1422);">April</div>
<div class="tx" id="t39" style="left:914.49px;top:541.35px;font-size:14.0px;color:#666;font-weight:normal;transform:scaleX(1.1908);">May</div>
<div class="tx" id="t40" style="left:986.57px;top:541.35px;font-size:14.0px;color:#666;font-weight:normal;transform:scaleX(1.1529);">June</div>
<div class="tx" id="t41" style="left:1063.39px;top:541.35px;font-size:14.0px;color:#666;font-weight:normal;transform:scaleX(1.1644);">July</div>
<div class="tx" id="t42" style="left:1137.92px;top:541.35px;font-size:14.0px;color:#666;font-weight:normal;transform:scaleX(1.1075);">Aug</div>
<div class="tx" id="t43" style="left:1212.30px;top:541.35px;font-size:14.0px;color:#666;font-weight:normal;transform:scaleX(1.0633);">Sep</div>
<div class="tx" id="t44" style="left:1285.38px;top:541.35px;font-size:14.0px;color:#666;font-weight:normal;transform:scaleX(1.2855);">Oct</div>
<div class="tx" id="t45" style="left:1358.97px;top:541.35px;font-size:14.0px;color:#666;font-weight:normal;transform:scaleX(1.1443);">Nov</div>
<div class="tx" id="t46" style="left:1432.80px;top:541.35px;font-size:14.0px;color:#666;font-weight:normal;transform:scaleX(1.1443);">Dec</div>
<div class="tx" id="t47" style="left:897.00px;top:569.20px;font-size:15.0px;color:#128a8c;font-weight:normal;transform:scaleX(1.0112);">Billed</div>
<div class="tx" id="t48" style="left:965.30px;top:569.20px;font-size:15.0px;color:#e07470;font-weight:normal;transform:scaleX(1.0590);">Unbilled</div>
<div class="tx" id="t49" style="left:1054.00px;top:569.20px;font-size:15.0px;color:#8fb6bd;font-weight:normal;transform:scaleX(1.0641);">No Charge</div>

<!-- red arrow -->
<svg class="a" style="left:0;top:0" width="200" height="200" viewBox="0 0 200 200">
  <path d="M96.3 175 L88.9 60" stroke="#fa0a0a" stroke-width="3" stroke-linecap="round"/>
  <path d="M87.3 45.8 L82 64 L94.4 63.4 Z" fill="#fa0a0a"/>
</svg>
</body></html>
